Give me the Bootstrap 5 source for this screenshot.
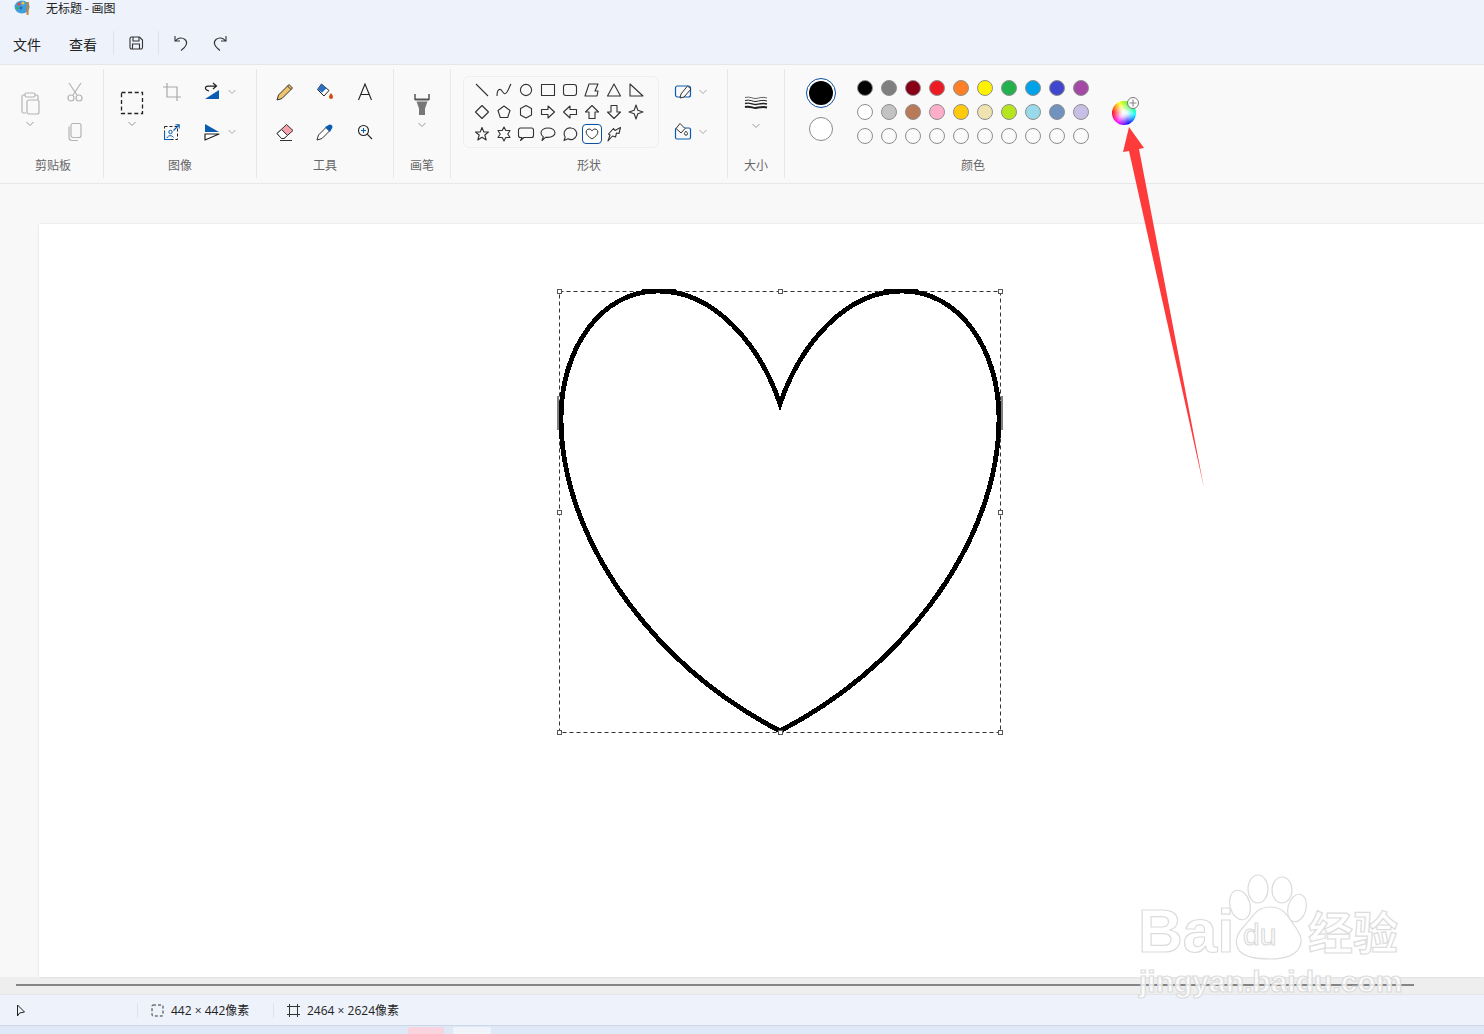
<!DOCTYPE html>
<html lang="zh-CN">

<head>
    <meta charset="UTF-8">
    <meta name="viewport" content="width=device-width, initial-scale=1.0">
    <title>无标题 - 画图</title>
    <link rel="stylesheet" href="https://cdn.jsdelivr.net/npm/bootstrap@5.3.2/dist/css/bootstrap.min.css">
    <style>
        html, body { height: 100%; }
        body {
            font-family: "Open Sans", "Noto Sans CJK SC", sans-serif;
            overflow: hidden;
            position: relative;
            background-color: #f8f8f8;
            color: #222;
        }
        .cjk { font-family: "Noto Sans CJK SC", sans-serif; }
        svg { display: block; flex: none; }

        /* title + menu */
        .title-bar { height: 22px; background-color: #eef3fb; padding-left: 14px; font-size: 12px; line-height: 16px; }
        .title-bar span { margin-left: 14px; }
        .menu-bar { height: 43px; background-color: #eef3fb; border-bottom: 1px solid #e4e6ea; font-size: 14px; padding: 0 0 1px 0; }
        .menu-item { width: 56px; text-align: center; margin-top: 3px; }
        .menu-item:first-child { margin-left: -1px; }
        .menu-sep { width: 1px; height: 24px; background-color: #dfe2e6; }
        .menu-sep.first { margin-left: 2px; }
        .menu-save { margin: 0 14px; }
        .menu-undo { margin-left: 14px; }
        .menu-redo { margin-left: 23px; }

        /* ribbon */
        .ribbon { height: 119px; background-color: #f9f9f9; border-bottom: 1px solid #e8e8e8; padding-top: 4px; }
        .group { height: 109px; padding-top: 3px; border-right: 1px solid #e8e8e8; flex: none; }
        .group-body { height: 80px; }
        .group-label { height: 24px; line-height: 25px; text-align: center; font-size: 12px; color: #666; }
        .g-clip { width: 104px; } .g-image { width: 153px; } .g-tools { width: 137px; } .g-brush { width: 57px; }
        .g-shapes { width: 277px; } .g-size { width: 57px; } .g-color { width: 376px; border-right: 0; }
        .g-clip .group-label { padding-left: 3px; }

        .tool { width: 40px; height: 40px; display: flex; align-items: center; justify-content: center; }
        .tool-drop { height: 40px; display: flex; align-items: center; gap: 2px; padding-left: 8px; }
        .tool-drop.flush { padding-left: 0; }
        .tool-big { width: 40px; height: 80px; display: flex; flex-direction: column; align-items: center; padding-top: 19px; gap: 6px; }
        .tool-big.tall { padding-top: 21px; gap: 7px; }
        .tool-big.size { padding-top: 24px; gap: 13px; }
        .tool-grid { display: grid; grid-template-rows: 40px 40px; grid-auto-flow: column; grid-auto-columns: max-content; justify-content: start; padding-left: 8px; }
        .tool-grid .tool-big { grid-row: span 2; }
        .g-clip .tool-grid { padding-left: 10px; column-gap: 5px; }
        .center-body { display: flex; justify-content: center; padding-right: 1px; }

        .gallery {
            width: 196px; height: 72px; margin: 4px 12px 0 12px;
            border: 1px solid #eeeeee; border-radius: 6px; padding: 2px 0 0 7px;
            display: grid; grid-template-columns: repeat(8, 22px); grid-auto-rows: 22px;
        }
        .shape { display: flex; align-items: center; justify-content: center; }
        .shape svg { fill: none; stroke: #333; stroke-width: 1.1; stroke-linejoin: round; }
        .shape.active svg { border: 1.5px solid #0b4f9e; border-radius: 4px; background-color: #fff; }

        .current { width: 30px; margin: 6px 21px 0 21px; gap: 9px; }
        .current-fg { width: 30px; height: 30px; border-radius: 50%; border: 1px solid #0b4f9e; padding: 2px; background-color: #fff; }
        .current-fg i { display: block; width: 100%; height: 100%; border-radius: 50%; background-color: #000; }
        .current-bg { width: 24px; height: 24px; border-radius: 50%; background-color: #fff; border: 1px solid #8a8a8a; margin-left: 3px; }
        .swatches { margin-top: 8px; display: grid; grid-template-columns: repeat(10, 16px); grid-auto-rows: 16px; gap: 8px; width: 232px; height: 64px; }
        .swatch { border-radius: 50%; border: 1px solid #8e8e8e; }
        .wheel {
            width: 24px; height: 24px; border-radius: 50%; margin: 29px 0 0 23px; position: relative;
            background: radial-gradient(circle, #fff 0, rgba(255,255,255,.85) 20%, rgba(255,255,255,0) 72%),
                conic-gradient(from -25deg, #ff0, #0f0, #0ff, #00f, #f0f, #f00, #ff0);
        }
        .wheel-add {
            position: absolute; top: -4px; right: -3px; width: 12px; height: 12px; border-radius: 50%;
            background-color: #fff; border: 1px solid #777;
        }

        /* workspace */
        .workspace { background-color: #f8f8f8; padding: 40px 0 0 39px; min-height: 0; }
        .sheet { background-color: #fff; height: 100%; position: relative; box-shadow: 0 0 2px rgba(0,0,0,.12); }
        .picture { position: absolute; left: 516px; top: 63px; }
        .hscroll { height: 17px; background-color: #eeeeee; padding: 7px 70px 0 16px; }
        .hscroll div { height: 2px; background-color: #858585; }

        /* status */
        .status-bar { height: 32px; background-color: #eef3fb; border-top: 1px solid #e3e5e8; border-bottom: 1px solid #ccd6e6; font-size: 12px; padding-top: 1px; }
        .status-cell { display: flex; align-items: center; gap: 7px; height: 16px; padding-left: 13px; }
        .status-tool { width: 137px; padding-left: 16px; }
        .status-select { width: 135px; }
        .status-sep { width: 1px; height: 15px; background-color: #dfe2e6; }
        .task-strip { height: 8px; background-color: #dfe8f7; position: relative; }
        .task-pink { position: absolute; left: 408px; top: 1px; width: 36px; height: 8px; background-color: #f9d4de; border-radius: 3px 3px 0 0; }
        .task-white { position: absolute; left: 453px; top: 1px; width: 38px; height: 8px; background-color: #f0f3fa; border-radius: 3px 3px 0 0; }

        /* overlays */
        .overlay { position: absolute; left: 0; top: 0; pointer-events: none; }
        .watermark { position: absolute; left: 1130px; top: 870px; width: 290px; height: 140px; pointer-events: none; }
        .watermark svg { position: absolute; left: 0; top: 0; }
        .watermark span {
            position: absolute; white-space: nowrap; color: rgba(255,255,255,.8);
            -webkit-text-stroke: 1.2px #dcdcdc; font-family: "Liberation Sans", sans-serif; line-height: 1;
        }
        .wm-bai { left: 8px; top: 30px; font-size: 62px; font-weight: 700; }
        .wm-du { left: 113px; top: 50px; font-size: 30px; }
        .watermark .wm-cn { left: 178px; top: 38px; font-size: 45px; font-family: "Noto Sans CJK SC", sans-serif; font-weight: 700; }
        .wm-url { left: 9px; top: 97px; font-size: 30px; font-weight: 700; }
    </style>
</head>

<body class="d-flex flex-column">
    <!-- title -->
    <div class="title-bar d-flex cjk">
        <svg width="18" height="16" viewBox="0 0 18 16">
            <ellipse cx="8" cy="7" rx="7.500" ry="6.500" fill="#3f9fd8"/>
            <circle cx="5" cy="4" r="1.600" fill="#e8483f"/><circle cx="9" cy="3" r="1.500" fill="#f4c430"/>
            <circle cx="3.500" cy="8" r="1.500" fill="#3db05a"/><circle cx="7" cy="8" r="1.400" fill="#2166c4"/>
            <path d="M13 2 L15 2 L14.500 15 L12.500 15Z" fill="#c9813a"/>
        </svg>
        <span>无标题 - 画图</span>
    </div>

    <!-- menu -->
    <div class="menu-bar d-flex align-items-center cjk">
        <div class="menu-item">文件</div>
        <div class="menu-item">查看</div>
        <div class="menu-sep first"></div>
        <svg class="menu-save" width="16" height="16" viewBox="0 0 16 16" fill="none" stroke="#333" stroke-width="1.100">
            <path d="M2 3.500a1.500 1.500 0 0 1 1.500-1.500h8L14.500 5v7.500a1.500 1.500 0 0 1-1.500 1.500H3.500A1.500 1.500 0 0 1 2 12.500Z"/>
            <path d="M5 2v4h6V2M4.500 14V9h7v5"/>
        </svg>
        <div class="menu-sep"></div>
        <svg class="menu-undo" width="16" height="18" viewBox="0 0 16 18" fill="none" stroke="#333" stroke-width="1.100">
            <path d="M2 2v5h5M2.200 7C5 3.500 9 3 12 5.500c3 2.800 2 6.500-4 11"/>
        </svg>
        <svg class="menu-redo" width="16" height="18" viewBox="0 0 16 18" fill="none" stroke="#333" stroke-width="1.100">
            <path d="M14 2v5H9M13.800 7C11 3.500 7 3 4 5.500c-3 2.800-2 6.500 4 11"/>
        </svg>
    </div>

    <!-- ribbon -->
    <div class="ribbon d-flex">
        <div class="group g-clip">
            <div class="group-body tool-grid">
                <div class="tool-big">
                    <svg width="22" height="24" viewBox="0 0 22 24" fill="none" stroke="#b4b4b4" stroke-width="1.200">
                        <path d="M6 4H4.500A1.500 1.500 0 0 0 3 5.500v15A1.500 1.500 0 0 0 4.500 22H7"/><path d="M16 4h1.500A1.500 1.500 0 0 1 19 5.500V9"/>
                        <rect x="6" y="2" width="10" height="4" rx="1.500"/><rect x="8" y="9" width="12" height="14" rx="2"/>
                    </svg>
                    <svg width="10" height="6" viewBox="0 0 10 6" fill="none" stroke="#999"><path d="M1.500 1 5 4.500 8.500 1"/></svg>
                </div>
                <div class="tool">
                    <svg width="20" height="20" viewBox="0 0 20 20" fill="none" stroke="#b4b4b4" stroke-width="1.200">
                        <path d="M4 1l8 12M16 1 8 13"/><circle cx="6" cy="16" r="3"/><circle cx="14" cy="16" r="3"/>
                    </svg>
                </div>
                <div class="tool">
                    <svg width="18" height="20" viewBox="0 0 18 20" fill="none" stroke="#b4b4b4" stroke-width="1.200">
                        <rect x="5" y="1.500" width="10" height="14" rx="2"/><path d="M3 4.500v11A3 3 0 0 0 6 18.500h6"/>
                    </svg>
                </div>
            </div>
            <div class="group-label cjk">剪贴板</div>
        </div>

        <div class="group g-image">
            <div class="group-body tool-grid">
                <div class="tool-big">
                    <svg width="24" height="24" viewBox="0 0 24 24" fill="none" stroke="#222" stroke-width="1.300">
                        <rect x="1.500" y="1.500" width="21" height="21" stroke-dasharray="4 2.600"/>
                    </svg>
                    <svg width="10" height="6" viewBox="0 0 10 6" fill="none" stroke="#999"><path d="M1.500 1 5 4.500 8.500 1"/></svg>
                </div>
                <div class="tool">
                    <svg width="18" height="18" viewBox="0 0 18 18" fill="none" stroke="#a9a9a9" stroke-width="1.200">
                        <path d="M4 0v14h14M0 4h14v14"/>
                    </svg>
                </div>
                <div class="tool">
                    <svg width="16" height="16" viewBox="0 0 16 16" fill="none">
                        <rect x=".5" y="2.500" width="13" height="13" stroke="#222" stroke-dasharray="3 2"/>
                        <path d="M.5 7V15.500H7" stroke="#0a5cb0" stroke-width="1.200"/>
                        <path d="M9.500 6.500 15 1M11.500 .8H15.200V4.500" stroke="#0a5cb0" stroke-width="1.100"/>
                        <circle cx="6.500" cy="8" r="1.700" stroke="#0a5cb0"/>
                        <path d="M3 14c1-3 5-3 6.500-.5" stroke="#0a5cb0"/>
                    </svg>
                </div>
                <div class="tool-drop">
                    <svg width="24" height="24" viewBox="0 0 24 24">
                        <path d="M5 19 19 10v9Z" fill="#0a5cb0"/>
                        <path d="M9 11C6 10 5 9 5.500 7.500 6 6 8 6 16 6M13 3l3.500 3L13 9" fill="none" stroke="#222" stroke-width="1.200"/>
                    </svg>
                    <svg width="12" height="6" viewBox="0 0 12 6" fill="none" stroke="#aaa"><path d="M2.500 1 6 4.500 9.500 1"/></svg>
                </div>
                <div class="tool-drop">
                    <svg width="24" height="24" viewBox="0 0 24 24">
                        <path d="M5 4 19 12H5Z" fill="#0a5cb0"/>
                        <path d="M5 14h14L5 20Z" fill="#fff" stroke="#222" stroke-width="1.200" stroke-linejoin="round"/>
                    </svg>
                    <svg width="12" height="6" viewBox="0 0 12 6" fill="none" stroke="#aaa"><path d="M2.500 1 6 4.500 9.500 1"/></svg>
                </div>
            </div>
            <div class="group-label cjk">图像</div>
        </div>

        <div class="group g-tools">
            <div class="group-body tool-grid">
                <div class="tool">
                    <svg width="18" height="18" viewBox="0 0 18 18">
                        <path d="M1 17 2.500 12 13 1.500 16.500 5 6 15.500Z" fill="#eec36c" stroke="#333" stroke-linejoin="round"/>
                        <path d="M11.500 3l3.500 3.500" stroke="#333"/>
                    </svg>
                </div>
                <div class="tool">
                    <svg width="18" height="18" viewBox="0 0 18 18">
                        <path d="M1 10.500 10.500 1.500 17 7.500 8 15.500H5.500Z" fill="#f4a3aa" stroke="#333" stroke-linejoin="round"/>
                        <path d="M1 10.500 5.500 15.500H8l3.500-3L5.500 6.500Z" fill="#fff" stroke="#333" stroke-linejoin="round"/>
                        <path d="M4 17.500h12" stroke="#333"/>
                    </svg>
                </div>
                <div class="tool">
                    <svg width="18" height="18" viewBox="0 0 18 18">
                        <path d="M5.500 1 13 7.500 8 13 1.500 6.500Z" fill="#fff" stroke="#222"/>
                        <path d="M5.500 1 10.500 5.200 6 9.800 1.800 6.300Z" fill="#2d6fc1"/>
                        <path d="M15 10c1 1.500 2 2.700 2 4a2 2 0 0 1-4 0c0-1.300 1-2.500 2-4Z" fill="#d64b14"/>
                    </svg>
                </div>
                <div class="tool">
                    <svg width="18" height="18" viewBox="0 0 18 18">
                        <path d="M10 4.500 2.500 12 1 17l5-1.500L13.500 8Z" fill="#fff" stroke="#333" stroke-linejoin="round"/>
                        <path d="M9 4 14 9l1-2 1-1.500a2.500 2.500 0 0 0-3.500-3.500L11 3Z" fill="#0a5cb0"/>
                    </svg>
                </div>
                <div class="tool">
                    <svg width="16" height="18" viewBox="0 0 16 18" fill="none" stroke="#222" stroke-width="1.100">
                        <path d="M1.500 17 8 1l6.500 16M3.800 11.500h8.400"/>
                    </svg>
                </div>
                <div class="tool">
                    <svg width="16" height="16" viewBox="0 0 16 16" fill="none" stroke="#222" stroke-width="1.100">
                        <circle cx="6.500" cy="6.500" r="5"/><path d="M10.200 10.200 15 15"/>
                        <path d="M4 6.500h5M6.500 4v5" stroke="#0a5cb0"/>
                    </svg>
                </div>
            </div>
            <div class="group-label cjk">工具</div>
        </div>

        <div class="group g-brush">
            <div class="group-body center-body">
                <div class="tool-big tall">
                    <svg width="16" height="22" viewBox="0 0 16 22">
                        <path d="M1 1v6M15 1v6" stroke="#555" stroke-width="1.500"/>
                        <path d="M1 6.500h14" stroke="#555" stroke-width="2"/>
                        <path d="M2.500 8.500h11l-2.500 7V22H5v-6.500Z" fill="#777"/>
                    </svg>
                    <svg width="10" height="6" viewBox="0 0 10 6" fill="none" stroke="#999"><path d="M1.500 1 5 4.500 8.500 1"/></svg>
                </div>
            </div>
            <div class="group-label cjk">画笔</div>
        </div>

        <div class="group g-shapes">
            <div class="group-body d-flex">
                <div class="gallery">
                    <div class="shape"><svg width="18" height="18" viewBox="0 0 18 18"><path d="M3 3 15 15"/></svg></div>
                    <div class="shape"><svg width="18" height="18" viewBox="0 0 18 18"><path d="M2 15C2 8 5 7 7 10s3 4 5 1 3-7 4-8"/></svg></div>
                    <div class="shape"><svg width="18" height="18" viewBox="0 0 18 18"><circle cx="9" cy="9" r="5.600"/></svg></div>
                    <div class="shape"><svg width="18" height="18" viewBox="0 0 18 18"><rect x="2.500" y="3.500" width="13" height="11"/></svg></div>
                    <div class="shape"><svg width="18" height="18" viewBox="0 0 18 18"><rect x="2.500" y="3.500" width="13" height="11" rx="2.500"/></svg></div>
                    <div class="shape"><svg width="18" height="18" viewBox="0 0 18 18"><path d="M6 3h9l-3 7h3l-1 5H2Z"/></svg></div>
                    <div class="shape"><svg width="18" height="18" viewBox="0 0 18 18"><path d="M9 3 15.500 15h-13Z"/></svg></div>
                    <div class="shape"><svg width="18" height="18" viewBox="0 0 18 18"><path d="M3 3 16 15H3Z"/></svg></div>

                    <div class="shape"><svg width="18" height="18" viewBox="0 0 18 18"><path d="M9 2.500 15.500 9 9 15.500 2.500 9Z"/></svg></div>
                    <div class="shape"><svg width="18" height="18" viewBox="0 0 18 18"><path d="M9 3 15 7.500 12.700 14.500H5.300L3 7.500Z"/></svg></div>
                    <div class="shape"><svg width="18" height="18" viewBox="0 0 18 18"><path d="M9 2.500 14.500 5.500V12L9 15 3.500 12V5.500Z"/></svg></div>
                    <div class="shape"><svg width="18" height="18" viewBox="0 0 18 18"><path d="M2.500 6.500H9V3l6.500 6L9 15v-3.500H2.500Z"/></svg></div>
                    <div class="shape"><svg width="18" height="18" viewBox="0 0 18 18"><path d="M15.500 6.500H9V3L2.500 9 9 15v-3.500h6.500Z"/></svg></div>
                    <div class="shape"><svg width="18" height="18" viewBox="0 0 18 18"><path d="M6 15.500V9H2.500L9 2.500 15.500 9H12v6.500Z"/></svg></div>
                    <div class="shape"><svg width="18" height="18" viewBox="0 0 18 18"><path d="M6 2.500V9H2.500L9 15.500 15.500 9H12V2.500Z"/></svg></div>
                    <div class="shape"><svg width="18" height="18" viewBox="0 0 18 18"><path d="M9 2 10.800 7.200 16 9 10.800 10.800 9 16 7.200 10.800 2 9 7.200 7.200Z"/></svg></div>

                    <div class="shape"><svg width="18" height="18" viewBox="0 0 18 18"><path d="M9 2.500 10.800 7H15.500L11.800 10 13.200 15 9 12.200 4.800 15 6.200 10 2.500 7H7.200Z"/></svg></div>
                    <div class="shape"><svg width="18" height="18" viewBox="0 0 18 18"><path d="M9 2 10.800 5.500H15L12.800 9 15 12.500H10.800L9 16 7.200 12.500H3L5.200 9 3 5.500H7.200Z"/></svg></div>
                    <div class="shape"><svg width="18" height="18" viewBox="0 0 18 18"><path d="M3.500 3h11A2 2 0 0 1 16.500 5v5.500a2 2 0 0 1-2 2H7L3.500 15.500 5 12.500H3.500a2 2 0 0 1-2-2V5a2 2 0 0 1 2-2Z"/></svg></div>
                    <div class="shape"><svg width="18" height="18" viewBox="0 0 18 18"><path d="M9 3c4 0 7 2 7 4.700s-3 4.700-7 4.700c-.8 0-1.500 0-2.200-.2L3 15.500l1.300-3.800C2.800 10.800 2 9.300 2 7.700 2 5 5 3 9 3Z"/></svg></div>
                    <div class="shape"><svg width="18" height="18" viewBox="0 0 18 18"><path d="M10 3a5.800 5.800 0 1 1-3 10.800L3 15.500l1.200-3.500A5.800 5.800 0 0 1 10 3Z"/></svg></div>
                    <div class="shape active"><svg width="20" height="20" viewBox="0 0 20 20"><path d="M10 15.500C6 13 3.500 10.500 3.500 7.800 3.500 5.700 5 4.500 6.700 4.500 8.200 4.500 9.400 5.400 10 6.700 10.600 5.400 11.800 4.500 13.300 4.500 15 4.500 16.500 5.700 16.500 7.800 16.500 10.500 14 13 10 15.500Z"/></svg></div>
                    <div class="shape"><svg width="18" height="18" viewBox="0 0 18 18"><path d="M3 16 5 10 3.500 9 8.500 3.500 10 5.500 15.500 2.500 14 8.500 11.500 8 10.500 12 7.500 11Z"/></svg></div>
                </div>
                <div>
                    <div class="tool-drop flush">
                        <svg width="24" height="24" viewBox="0 0 24 24" fill="none">
                            <rect x="4.500" y="6" width="15" height="11" rx="2" stroke="#0a5cb0" stroke-width="1.200"/>
                            <path d="M9 18 10 14 16.500 6 20 9 13 17Z" fill="#f9f9f9" stroke="#333" stroke-linejoin="round"/>
                        </svg>
                        <svg width="12" height="6" viewBox="0 0 12 6" fill="none" stroke="#aaa"><path d="M2.500 1 6 4.500 9.500 1"/></svg>
                    </div>
                    <div class="tool-drop flush">
                        <svg width="24" height="24" viewBox="0 0 24 24" fill="none">
                            <rect x="4.500" y="8" width="15" height="11" rx="1.500" stroke="#0a5cb0" stroke-width="1.200"/>
                            <path d="M9 3.500 14 8.500 10 13 5 8.500Z" fill="#f9f9f9" stroke="#333"/>
                            <path d="M15 11c.7 1 1.500 1.800 1.500 2.700a1.500 1.500 0 0 1-3 0c0-.9.800-1.700 1.500-2.700Z" fill="#fff" stroke="#333"/>
                        </svg>
                        <svg width="12" height="6" viewBox="0 0 12 6" fill="none" stroke="#aaa"><path d="M2.500 1 6 4.500 9.500 1"/></svg>
                    </div>
                </div>
            </div>
            <div class="group-label cjk">形状</div>
        </div>

        <div class="group g-size">
            <div class="group-body center-body">
                <div class="tool-big size">
                    <svg width="24" height="14" viewBox="0 0 24 14" fill="none" stroke="#222">
                        <path d="M1 1.500c5-1.500 8 1.500 11 1S19 .5 23 2" stroke-width=".7"/>
                        <path d="M1 4.500c5-1.500 8 1.500 11 1s7-2 11-.5" stroke-width="1"/>
                        <path d="M1 7.500c5-1.500 8 1.500 11 1s7-2 11-.5" stroke-width="1.400"/>
                        <path d="M1 11c5-1.500 8 1.500 11 1s7-2 11-.5" stroke-width="2"/>
                    </svg>
                    <svg width="10" height="6" viewBox="0 0 10 6" fill="none" stroke="#999"><path d="M1.500 1 5 4.500 8.500 1"/></svg>
                </div>
            </div>
            <div class="group-label cjk">大小</div>
        </div>

        <div class="group g-color">
            <div class="group-body d-flex">
                <div class="current d-flex flex-column">
                    <div class="current-fg"><i></i></div>
                    <div class="current-bg"></div>
                </div>
                <div class="swatches" id="swatches"></div>
                <div class="wheel">
                    <div class="wheel-add">
                        <svg width="10" height="10" viewBox="0 0 10 10" stroke="#888" stroke-width="1.200"><path d="M5 1.500v7M1.500 5h7"/></svg>
                    </div>
                </div>
            </div>
            <div class="group-label cjk">颜色</div>
        </div>
    </div>

    <!-- canvas -->
    <div class="workspace flex-grow-1">
        <div class="sheet">
            <svg class="picture" width="454" height="454" viewBox="555 287 454 454" fill="none">
                <rect x="559.500" y="291.500" width="441" height="441" stroke="#333" stroke-width="1" stroke-dasharray="4 3"/>
                <path d="M780 404C760 345 715 291 658 291C600 291 561 350 561 418C561 480 585 545 630 605C675 665 730 705 780 731C830 705 885 665 930 605C975 545 999 480 999 418C999 350 960 291 902 291C845 291 800 345 780 404Z" stroke="#000" stroke-width="4.800" stroke-linejoin="miter" shape-rendering="crispEdges"/>
                <path d="M558 396v34M1002 396v34M642 289.500h34M884 289.500h34" stroke="#000" stroke-width="1"/>
                <g fill="#fff" stroke="#555" stroke-width="1">
                    <rect x="557.500" y="289.500" width="4" height="4"/><rect x="778.500" y="289.500" width="4" height="4"/><rect x="998.500" y="289.500" width="4" height="4"/>
                    <rect x="557.500" y="510.500" width="4" height="4"/><rect x="998.500" y="510.500" width="4" height="4"/>
                    <rect x="557.500" y="730.500" width="4" height="4"/><rect x="778.500" y="730.500" width="4" height="4"/><rect x="998.500" y="730.500" width="4" height="4"/>
                </g>
            </svg>
        </div>
    </div>
    <div class="hscroll"><div></div></div>

    <!-- status -->
    <div class="status-bar d-flex align-items-center">
        <div class="status-cell status-tool">
            <svg width="10" height="13" viewBox="0 0 10 13" fill="none" stroke="#222"><path d="M1.500 1v11L3.500 9 8.500 8Z" stroke-linejoin="round"/></svg>
        </div>
        <div class="status-sep"></div>
        <div class="status-cell status-select">
            <svg width="13" height="13" viewBox="0 0 13 13" fill="none" stroke="#333"><rect x="1" y="1" width="11" height="11" rx="1" stroke-dasharray="3 2"/></svg>
            <span>442 × 442像素</span>
        </div>
        <div class="status-sep"></div>
        <div class="status-cell">
            <svg width="13" height="13" viewBox="0 0 13 13" fill="none" stroke="#333"><path d="M2.500 0v13M10.500 0v13M0 2.500h13M0 10.500h13"/></svg>
            <span>2464 × 2624像素</span>
        </div>
    </div>
    <div class="task-strip"><div class="task-pink"></div><div class="task-white"></div></div>

    <!-- red arrow -->
    <svg class="overlay" width="1484" height="1034" viewBox="0 0 1484 1034">
        <path d="M1129 127 1144 148 1139 149 1204 488 1129 151 1123 152Z" fill="#fe3b3b"/>
    </svg>

    <!-- watermark -->
    <div class="watermark">
        <svg width="290" height="140" viewBox="1130 870 290 140" fill="rgba(255,255,255,.7)" stroke="#dcdcdc" stroke-width="1.200">
            <ellipse cx="1258" cy="889" rx="10" ry="14"/><ellipse cx="1282" cy="890" rx="10" ry="13"/>
            <ellipse cx="1240" cy="905" rx="10" ry="15" transform="rotate(-15 1240 905)"/>
            <ellipse cx="1297" cy="908" rx="9" ry="14" transform="rotate(15 1297 908)"/>
            <path d="M1270 907c14 0 18 10 24 18 6 9 9 14 6 21-3 8-12 13-30 13s-31-4-33-13c-2-8 1-13 8-21 8-8 11-18 25-18Z"/>
        </svg>
        <span class="wm-bai">Bai</span>
        <span class="wm-du">du</span>
        <span class="wm-cn">经验</span>
        <span class="wm-url">jingyan.baidu.com</span>
    </div>

    <script src="https://cdn.jsdelivr.net/npm/bootstrap@5.3.2/dist/js/bootstrap.bundle.min.js"></script>
    <script>
        // palette, last row is the empty custom colours
        const colours = [
            '#000000', '#7f7f7f', '#880015', '#ed1c24', '#ff7f27', '#fff200', '#22b14c', '#00a2e8', '#3f48cc', '#a349a4',
            '#ffffff', '#c3c3c3', '#b97a57', '#ffaec9', '#ffc90e', '#efe4b0', '#b5e61d', '#99d9ea', '#7092be', '#c8bfe7',
            '', '', '', '', '', '', '', '', '', ''
        ];
        const holder = document.getElementById('swatches');
        colours.forEach(c => {
            const s = document.createElement('div');
            s.className = 'swatch';
            if (c) s.style.backgroundColor = c;
            holder.appendChild(s);
        });
    </script>
</body>

</html>
